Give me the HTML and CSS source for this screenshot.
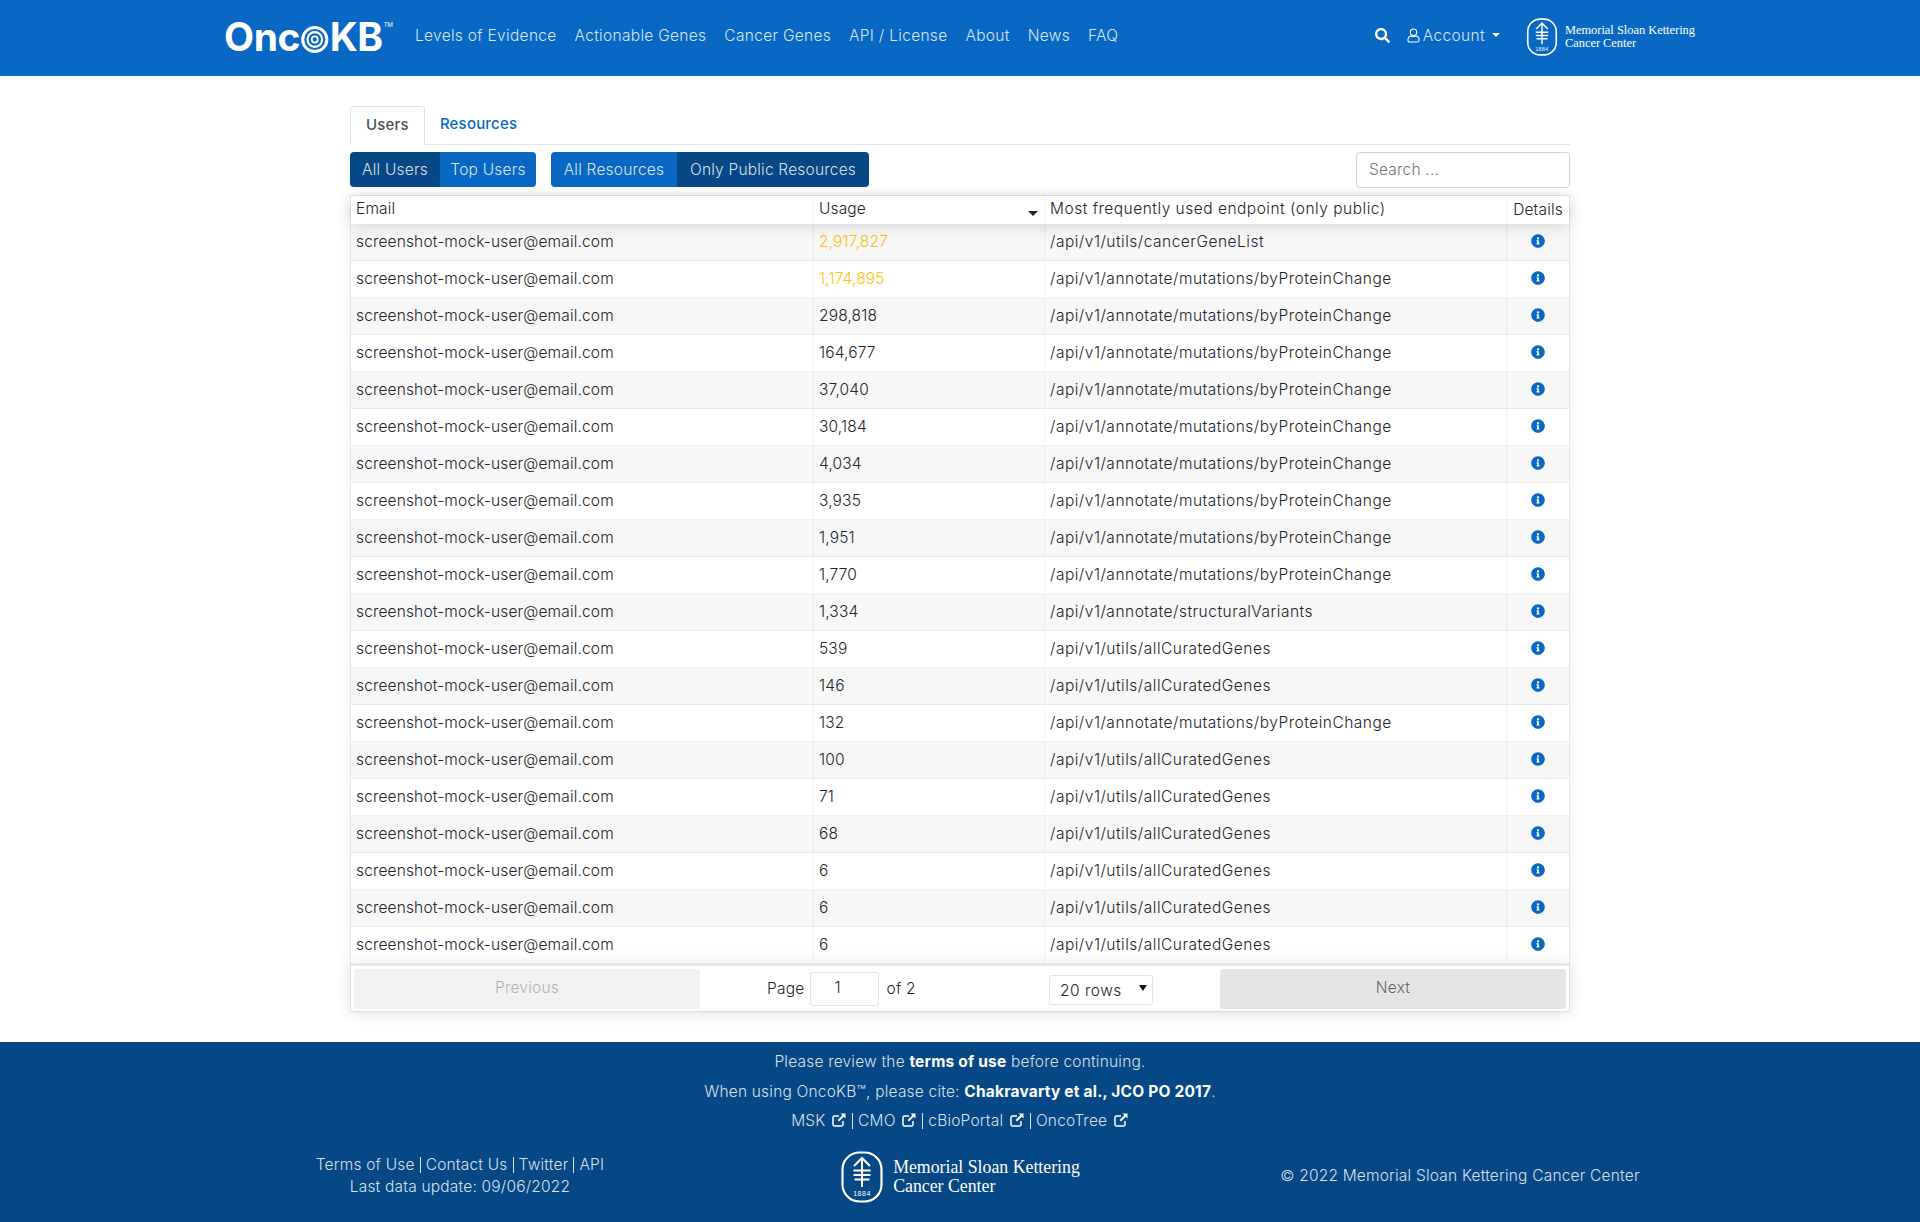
FILE: index.html
```html
<!DOCTYPE html>
<html>
<head>
<meta charset="UTF-8">
<title>OncoKB - Usage Analysis</title>
<link rel="stylesheet" href="styles.css">
</head>
<body>
	<svg class="defs" width="0" height="0">
		<symbol id="i-info" viewBox="0 0 512 512"><path d="M256 8C119.043 8 8 119.083 8 256c0 136.997 111.043 248 248 248s248-111.003 248-248C504 119.083 392.957 8 256 8zm0 110c23.196 0 42 18.804 42 42s-18.804 42-42 42-42-18.804-42-42 18.804-42 42-42zm56 254c0 6.627-5.373 12-12 12h-88c-6.627 0-12-5.373-12-12v-24c0-6.627 5.373-12 12-12h12v-64h-12c-6.627 0-12-5.373-12-12v-24c0-6.627 5.373-12 12-12h64c6.627 0 12 5.373 12 12v100h12c6.627 0 12 5.373 12 12v24z"/></symbol>
		<symbol id="i-ext" viewBox="0 0 16 16"><path d="M12 9v3.500a1.500 1.500 0 0 1-1.500 1.500h-7A1.500 1.500 0 0 1 2 12.500v-7A1.500 1.500 0 0 1 3.500 4H8" fill="none" stroke="currentColor" stroke-width="1.500"/><path d="M9.500 1.500h5v5l-1.800-1.800-4.700 4.700-1.400-1.400 4.700-4.700z" fill="currentColor"/></symbol>
	</svg>

	<header class="navbar">
		<a class="brand">Onc<svg class="brand-o" viewBox="0 0 32 32"><circle cx="16" cy="16" r="14" fill="none" stroke="#fff" stroke-width="3.500"/><circle cx="16" cy="16" r="8.500" fill="none" stroke="#fff" stroke-width="2.500"/><circle cx="16" cy="16" r="3.500" fill="none" stroke="#fff" stroke-width="2"/></svg>KB<span class="tm">TM</span></a>
		<nav class="nav-links">
			<a>Levels of Evidence</a>
			<a>Actionable Genes</a>
			<a>Cancer Genes</a>
			<a>API / License</a>
			<a>About</a>
			<a>News</a>
			<a>FAQ</a>
		</nav>
		<div class="nav-right">
			<svg class="search-icon" viewBox="0 0 512 512"><path fill="#fff" d="M505 442.700L405.300 343c-4.500-4.500-10.600-7-17-7H372c27.600-35.300 44-79.700 44-128C416 93.100 322.900 0 208 0S0 93.100 0 208s93.100 208 208 208c48.300 0 92.700-16.400 128-44v16.300c0 6.400 2.500 12.500 7 17l99.700 99.700c9.400 9.400 24.600 9.400 33.900 0l28.300-28.300c9.400-9.400 9.400-24.600.1-34zM208 336c-70.700 0-128-57.200-128-128 0-70.700 57.200-128 128-128 70.700 0 128 57.200 128 128 0 70.700-57.200 128-128 128z"/></svg>
			<a class="account">
				<svg class="user-icon" viewBox="0 0 14 16"><circle cx="7" cy="4.500" r="3.500" fill="none" stroke="#fff" stroke-width="1.200"/><path d="M1 13c0-3 1.500-4.500 3.500-4.500 1 .5 4 .5 5 0C11.500 8.500 13 10 13 13c0 1.300-.7 2-2 2H3c-1.300 0-2-.7-2-2z" fill="none" stroke="#fff" stroke-width="1.200"/></svg>
				Account<span class="caret"></span>
			</a>
			<div class="msk msk-small">
				<svg class="msk-mark" viewBox="0 0 42 52">
					<rect x="1.500" y="1.500" width="39" height="49" rx="17" ry="17" fill="none" stroke="#fff" stroke-width="2.200"/>
					<path d="M21 7v29M13 15l8-8 8 8M12.500 19.500h17M12.500 24h17M13.500 28.500h15" fill="none" stroke="#fff" stroke-width="2"/>
					<text x="21" y="45" text-anchor="middle" class="msk-year">1884</text>
				</svg>
				<div class="msk-name">Memorial Sloan Kettering<br>Cancer Center</div>
			</div>
		</div>
	</header>

	<main class="content">
		<ul class="tabs">
			<li class="tab active">Users</li>
			<li class="tab">Resources</li>
		</ul>

		<div class="toolbar">
			<div class="btn-group">
				<button class="btn dark users-all">All Users</button><button class="btn users-top">Top Users</button>
			</div>
			<div class="btn-group">
				<button class="btn res-all">All Resources</button><button class="btn dark res-public">Only Public Resources</button>
			</div>
			<input class="search" type="text" placeholder="Search ...">
		</div>

		<div class="grid-table">
			<div class="row head">
				<div class="cell">Email</div>
				<div class="cell sorted">Usage</div>
				<div class="cell">Most frequently used endpoint (only public)</div>
				<div class="cell center">Details</div>
			</div>

			<div class="row"><div class="cell">screenshot-mock-user@email.com</div><div class="cell top-use">2,917,827</div><div class="cell">/api/v1/utils/cancerGeneList</div><div class="cell center"><svg class="info"><use href="#i-info"/></svg></div></div>
			<div class="row"><div class="cell">screenshot-mock-user@email.com</div><div class="cell top-use">1,174,895</div><div class="cell">/api/v1/annotate/mutations/byProteinChange</div><div class="cell center"><svg class="info"><use href="#i-info"/></svg></div></div>
			<div class="row"><div class="cell">screenshot-mock-user@email.com</div><div class="cell">298,818</div><div class="cell">/api/v1/annotate/mutations/byProteinChange</div><div class="cell center"><svg class="info"><use href="#i-info"/></svg></div></div>
			<div class="row"><div class="cell">screenshot-mock-user@email.com</div><div class="cell">164,677</div><div class="cell">/api/v1/annotate/mutations/byProteinChange</div><div class="cell center"><svg class="info"><use href="#i-info"/></svg></div></div>
			<div class="row"><div class="cell">screenshot-mock-user@email.com</div><div class="cell">37,040</div><div class="cell">/api/v1/annotate/mutations/byProteinChange</div><div class="cell center"><svg class="info"><use href="#i-info"/></svg></div></div>
			<div class="row"><div class="cell">screenshot-mock-user@email.com</div><div class="cell">30,184</div><div class="cell">/api/v1/annotate/mutations/byProteinChange</div><div class="cell center"><svg class="info"><use href="#i-info"/></svg></div></div>
			<div class="row"><div class="cell">screenshot-mock-user@email.com</div><div class="cell">4,034</div><div class="cell">/api/v1/annotate/mutations/byProteinChange</div><div class="cell center"><svg class="info"><use href="#i-info"/></svg></div></div>
			<div class="row"><div class="cell">screenshot-mock-user@email.com</div><div class="cell">3,935</div><div class="cell">/api/v1/annotate/mutations/byProteinChange</div><div class="cell center"><svg class="info"><use href="#i-info"/></svg></div></div>
			<div class="row"><div class="cell">screenshot-mock-user@email.com</div><div class="cell">1,951</div><div class="cell">/api/v1/annotate/mutations/byProteinChange</div><div class="cell center"><svg class="info"><use href="#i-info"/></svg></div></div>
			<div class="row"><div class="cell">screenshot-mock-user@email.com</div><div class="cell">1,770</div><div class="cell">/api/v1/annotate/mutations/byProteinChange</div><div class="cell center"><svg class="info"><use href="#i-info"/></svg></div></div>
			<div class="row"><div class="cell">screenshot-mock-user@email.com</div><div class="cell">1,334</div><div class="cell">/api/v1/annotate/structuralVariants</div><div class="cell center"><svg class="info"><use href="#i-info"/></svg></div></div>
			<div class="row"><div class="cell">screenshot-mock-user@email.com</div><div class="cell">539</div><div class="cell">/api/v1/utils/allCuratedGenes</div><div class="cell center"><svg class="info"><use href="#i-info"/></svg></div></div>
			<div class="row"><div class="cell">screenshot-mock-user@email.com</div><div class="cell">146</div><div class="cell">/api/v1/utils/allCuratedGenes</div><div class="cell center"><svg class="info"><use href="#i-info"/></svg></div></div>
			<div class="row"><div class="cell">screenshot-mock-user@email.com</div><div class="cell">132</div><div class="cell">/api/v1/annotate/mutations/byProteinChange</div><div class="cell center"><svg class="info"><use href="#i-info"/></svg></div></div>
			<div class="row"><div class="cell">screenshot-mock-user@email.com</div><div class="cell">100</div><div class="cell">/api/v1/utils/allCuratedGenes</div><div class="cell center"><svg class="info"><use href="#i-info"/></svg></div></div>
			<div class="row"><div class="cell">screenshot-mock-user@email.com</div><div class="cell">71</div><div class="cell">/api/v1/utils/allCuratedGenes</div><div class="cell center"><svg class="info"><use href="#i-info"/></svg></div></div>
			<div class="row"><div class="cell">screenshot-mock-user@email.com</div><div class="cell">68</div><div class="cell">/api/v1/utils/allCuratedGenes</div><div class="cell center"><svg class="info"><use href="#i-info"/></svg></div></div>
			<div class="row"><div class="cell">screenshot-mock-user@email.com</div><div class="cell">6</div><div class="cell">/api/v1/utils/allCuratedGenes</div><div class="cell center"><svg class="info"><use href="#i-info"/></svg></div></div>
			<div class="row"><div class="cell">screenshot-mock-user@email.com</div><div class="cell">6</div><div class="cell">/api/v1/utils/allCuratedGenes</div><div class="cell center"><svg class="info"><use href="#i-info"/></svg></div></div>
			<div class="row"><div class="cell">screenshot-mock-user@email.com</div><div class="cell">6</div><div class="cell">/api/v1/utils/allCuratedGenes</div><div class="cell center"><svg class="info"><use href="#i-info"/></svg></div></div>

			<div class="pagination">
				<button class="page-btn prev" disabled>Previous</button>
				<div class="page-mid">
					<div class="page-info">Page <input class="page-input" type="text" value="1"> of 2</div>
					<div class="page-size-box"><select class="page-size"><option>20 rows</option></select></div>
				</div>
				<button class="page-btn next">Next</button>
			</div>
		</div>
	</main>

	<footer class="footer">
		<p class="first-line">Please review the <b>terms of use</b> before continuing.</p>
		<p>When using OncoKB™, please cite: <b>Chakravarty et al., JCO PO 2017</b>.</p>
		<p class="ext-links">
			<a>MSK <svg class="ext"><use href="#i-ext"/></svg></a><i></i><a>CMO <svg class="ext"><use href="#i-ext"/></svg></a><i></i><a>cBioPortal <svg class="ext"><use href="#i-ext"/></svg></a><i></i><a>OncoTree <svg class="ext"><use href="#i-ext"/></svg></a>
		</p>
		<div class="foot-cols">
			<div class="foot-left">
				<div class="foot-links"><a>Terms of Use</a><i></i><a>Contact Us</a><i></i><a>Twitter</a><i></i><a>API</a></div>
				<div>Last data update: 09/06/2022</div>
			</div>
			<div class="msk msk-big">
				<svg class="msk-mark" viewBox="0 0 42 52">
					<rect x="1.500" y="1.500" width="39" height="49" rx="17" ry="17" fill="none" stroke="#fff" stroke-width="2.200"/>
					<path d="M21 7v29M13 15l8-8 8 8M12.500 19.500h17M12.500 24h17M13.500 28.500h15" fill="none" stroke="#fff" stroke-width="2"/>
					<text x="21" y="45" text-anchor="middle" class="msk-year">1884</text>
				</svg>
				<div class="msk-name">Memorial Sloan Kettering<br>Cancer Center</div>
			</div>
			<div class="foot-right">© 2022 Memorial Sloan Kettering Cancer Center</div>
		</div>
	</footer>
</body>
</html>
```

FILE: styles.css
```css
* {box-sizing: border-box;}
body {margin: 0; font-family: Inter, "Noto Sans", sans-serif; font-size: 15.5px; font-weight: 350; color: #212529; background: #fff; letter-spacing: .2px;}
.defs {position: absolute;}

/* top bar */
.navbar {display: flex; align-items: center; height: 76px; padding: 0 225px 6px 224px; background: #0968c3; color: rgba(255,255,255,.85);}
.brand {display: flex; align-items: center; width: 169px; margin-top: 3px; font-size: 39px; font-weight: 700; line-height: 46px; color: #fff; letter-spacing: -.4px;}
.brand-o {width: 29px; height: 29px; margin: 5px 1px 0;}
.tm {font-size: 6px; line-height: 8px; font-weight: 400; letter-spacing: 0; margin: -24px 0 0 1px;}
.nav-links {display: flex; gap: 18px; margin-left: 22px; letter-spacing: .3px;}
.nav-right {display: flex; align-items: center; margin-left: auto; letter-spacing: .35px;}
.search-icon {width: 15px; height: 15px; margin-right: 17px;}
.account {display: flex; align-items: center; gap: 3px; margin-right: 26px;}
.user-icon {width: 13px; height: 15px;}
.caret {width: 0; height: 0; margin-left: 4px; border: 4px solid transparent; border-top-color: #fff; border-bottom: 0;}

/* msk logo */
.msk {display: flex; align-items: center; color: #fff;}
.msk-name {font-family: "Liberation Serif", serif; font-weight: 400; letter-spacing: 0; line-height: 1.05;}
.msk-year {font-family: "Liberation Sans", sans-serif; font-size: 7px; fill: #fff; letter-spacing: .5px;}
.msk-small {margin-top: 4px;}
.msk-small .msk-mark {width: 32px; height: 38px; margin-right: 7px;}
.msk-small .msk-name {font-size: 12.4px;}
.msk-big {padding-top: 8px; margin-top: -5px;}
.msk-big .msk-mark {width: 44px; height: 52px; margin-right: 9px;}
.msk-big .msk-name {font-size: 17.8px;}

/* tabs */
.content {width: 1220px; margin: 0 auto; padding-top: 30px;}
.tabs {display: flex; list-style: none; margin: 0; padding: 0; height: 39px; border-bottom: 1px solid #dee2e6;}
.tab {padding: 0 15px; line-height: 36px; height: 39px; font-weight: 500; color: #0968c3; font-size: 15px; letter-spacing: .2px;}
.tab.active {color: #495057; background: #fff; border: 1px solid #dee2e6; border-bottom-color: #fff; border-radius: 4px 4px 0 0;}

/* buttons + search */
.toolbar {display: flex; align-items: center; gap: 15px; margin-top: 7px; height: 36px;}
.btn-group {display: flex; margin-top: -1px;}
.btn {height: 35px; padding: 0 0 1px; border: 0; background: #0968c3; color: rgba(255,255,255,.85); font: inherit; letter-spacing: inherit;}
.btn.dark {background: #064885;}
.btn-group .btn:first-child {border-radius: 4px 0 0 4px;}
.btn-group .btn:last-child {border-radius: 0 4px 4px 0;}
.users-all {width: 90px;}
.users-top {width: 96px;}
.res-all {width: 126px;}
.res-public {width: 192px;}
.search {width: 214px; height: 36px; margin-left: auto; padding: 0 12px 2px; border: 1px solid #ced4da; border-radius: 4px; font: inherit; letter-spacing: inherit; color: #495057;}
.search::placeholder {color: #6c757d;}

/* table */
.grid-table {margin-top: 7px; border: 1px solid rgba(0,0,0,.1); box-shadow: 0 2px 15px rgba(0,0,0,.05);}
.row {display: grid; grid-template-columns: 463px 231px 462px 1fr; height: 37px; line-height: 36px; border-bottom: 1px solid rgba(0,0,0,.05);}
.row:nth-child(even) {background: rgba(0,0,0,.03);}
.row.head {position: relative; height: 28px; line-height: 26px; background: #fff; border-bottom: 0; box-shadow: 0 2px 15px rgba(0,0,0,.15);}
.cell {padding: 0 5px; border-right: 1px solid rgba(0,0,0,.05); white-space: nowrap; overflow: hidden; letter-spacing: .15px;}
.cell:nth-child(3) {letter-spacing: .5px;}
.cell:last-child {border-right: 0;}
.center {display: flex; align-items: center; justify-content: center;}
.top-use {color: #ffc107;}
.sorted {position: relative;}
.sorted:after {content: ""; position: absolute; right: 6px; top: 15px; border: 5px solid transparent; border-top-color: #212529; border-bottom: 0;}
.info {width: 14px; height: 14px; fill: #0968c3; margin-top: -2px;}

/* pagination */
.pagination {position: relative; display: flex; align-items: center; height: 47px; padding: 3px; background: #fff; border-top: 2px solid rgba(0,0,0,.1); box-shadow: 0 0 15px rgba(0,0,0,.1);}
.page-btn {width: 346px; height: 40px; padding: 0 0 2px; border: 0; border-radius: 3px; background: rgba(0,0,0,.1); font: inherit; letter-spacing: inherit; color: rgba(0,0,0,.6);}
.page-btn.prev {opacity: .5;}
.page-mid {flex: 1; display: flex; align-items: center; justify-content: space-between; padding: 0 67px;}
.page-info {display: flex; align-items: center; gap: 4px; white-space: pre;}
.page-input {width: 69px; height: 34px; margin: 0 -1px 0 -3px; padding: 0 14px 2px 0; text-align: center; border: 1px solid rgba(0,0,0,.1); border-radius: 3px; font: inherit; color: #212529;}
.page-size-box {position: relative; margin-top: 3px;}
.page-size-box:after {content: ""; position: absolute; right: 6px; top: 10px; border: 4px solid transparent; border-top: 6px solid #111; border-bottom: 0;}
.page-size {display: block; width: 104px; height: 30px; padding: 0 10px; appearance: none; background: #fff; border: 1px solid rgba(0,0,0,.1); border-radius: 3px; font: inherit; letter-spacing: .5px; color: #212529;}

/* footer */
.footer {margin-top: 30px; height: 180px; padding-top: 5px; background: #064885; color: rgba(255,255,255,.85); text-align: center;}
.footer p {margin: 0; line-height: 29px; height: 29px;}
.footer .first-line {margin-bottom: 1px;}
.footer b {color: #fff; font-weight: 700;}
.ext {width: 16px; height: 16px; margin-left: 1px; vertical-align: -2px; color: #fff;}
.ext-links a, .foot-links a {white-space: nowrap;}
.ext-links i, .foot-links i {display: inline-block; width: 1px; height: 16px; margin: 0 5px; vertical-align: -3px; background: rgba(255,255,255,.85);}
.foot-cols {display: grid; grid-template-columns: repeat(3, 500px); justify-content: center; align-items: center; margin-top: 13px;}
.foot-left {line-height: 22px;}
.foot-cols .msk {justify-content: center; text-align: left;}
```
